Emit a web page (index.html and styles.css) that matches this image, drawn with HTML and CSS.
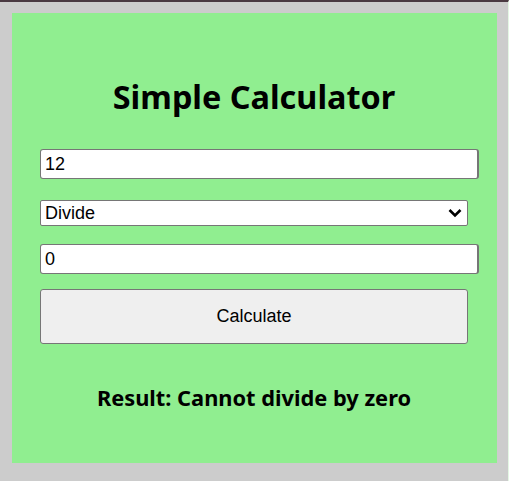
FILE: index.html
```html
<!DOCTYPE html>
<html>
<head>
<meta charset="utf-8">
<link rel="stylesheet" href="styles.css">
</head>
<body>
<div class="page">
  <div class="calc">
    <h1 class="title">Simple Calculator</h1>
    <input class="field" type="text" value="12">
    <div class="select-wrap">
      <select class="op">
        <option>Divide</option>
      </select>
      <svg class="chev" width="14" height="10" viewBox="0 0 14 10"><path d="M1.5 2 L7 7.5 L12.5 2" fill="none" stroke="#000" stroke-width="2.6"/></svg>
    </div>
    <input class="field field-2" type="text" value="0">
    <button class="btn">Calculate</button>
    <p class="result">Result: Cannot divide by zero</p>
  </div>
</div>
</body>
</html>
```

FILE: styles.css
```css
html {
  background: #ffffff;
}
body {
  margin: 0;
}
.page {
  width: 508px;
  min-height: 479px;
  background: #cccccc;
  border-top: 2px solid #4a3941;
  border-right: 1px solid #e4f7e4;
  padding-top: 11px;
  box-sizing: content-box;
}
.calc {
  margin-left: 12px;
  width: 428px;
  height: 450px;
  padding: 0 29px 0 28px;
  background: #90ee90;
  display: flex;
  flex-direction: column;
  align-items: flex-start;
  box-sizing: content-box;
}
.title {
  margin: 63px 0 0 0;
  width: 100%;
  height: 40px;
  line-height: 40px;
  text-align: center;
  font-family: "Noto Sans", sans-serif;
  font-weight: 700;
  font-size: 32.4px;
  color: #000;
}
.field {
  margin: 33px 0 0 0;
  width: 100%;
  height: 20px;
  padding: 4px;
  border: 1px solid #767676;
  border-right-width: 2px;
  border-radius: 3px;
  font-family: "Liberation Sans", Arial, sans-serif;
  font-size: 18px;
  color: #000;
  background: #fff;
  box-sizing: content-box;
}
.field-2 {
  margin-top: 18px;
}
.select-wrap {
  margin-top: 21px;
  width: 100%;
  position: relative;
  height: 26px;
}
.op {
  display: block;
  width: 100%;
  height: 26px;
  border: 1px solid #767676;
  border-radius: 2px;
  background: #fff;
  font-family: "Liberation Sans", Arial, sans-serif;
  font-size: 18px;
  color: #000;
  padding: 0 4px;
  box-sizing: border-box;
  appearance: none;
  -webkit-appearance: none;
}
.chev {
  position: absolute;
  right: 6px;
  top: 8px;
  pointer-events: none;
}
.btn {
  margin-top: 15px;
  width: 100%;
  height: 55px;
  border: 1px solid #767676;
  border-radius: 3px;
  background: #efefef;
  font-family: "Liberation Sans", Arial, sans-serif;
  font-size: 18px;
  color: #000;
  box-sizing: border-box;
  padding-bottom: 1px;
}
.result {
  margin: 40px 0 0 0;
  width: 100%;
  line-height: 28px;
  text-align: center;
  font-family: "Noto Sans", sans-serif;
  font-weight: 700;
  font-size: 21.8px;
  color: #000;
}
```
